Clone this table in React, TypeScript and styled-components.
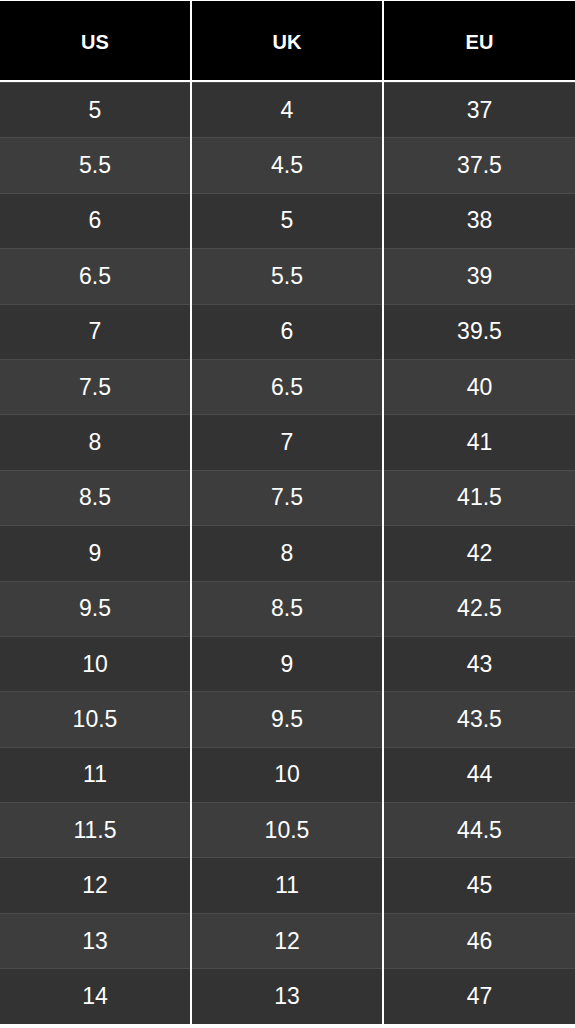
import React from "react";
import styled, { createGlobalStyle } from "styled-components";

const Global = createGlobalStyle`
  html, body { margin: 0; padding: 0; background: #ffffff; }
  body { font-family: "Liberation Sans", Arial, sans-serif; }
`;

const Table = styled.div`
  width: 575px;
  padding-top: 1px;
  background: #ffffff;
  display: flex;
  flex-direction: column;
`;

const Row = styled.div<{ $header?: boolean }>`
  display: grid;
  grid-template-columns: 190px 190px 1fr;
  column-gap: 2px;
  height: ${(p) => (p.$header ? "79px" : "55.4px")};
  margin-bottom: ${(p) => (p.$header ? "2px" : "0")};
`;

const Cell = styled.div<{ $header?: boolean; $alt?: boolean }>`
  display: flex;
  align-items: center;
  justify-content: center;
  box-sizing: border-box;
  padding-top: ${(p) => (p.$header ? "4px" : "0")};
  background: ${(p) => (p.$header ? "#000000" : p.$alt ? "#3d3d3d" : "#333333")};
  border-top: ${(p) => (p.$header ? "none" : "1px solid #4b4b4b")};
  color: #ffffff;
  font-size: ${(p) => (p.$header ? "20px" : "23px")};
  font-weight: ${(p) => (p.$header ? 700 : 400)};
`;

const rows: [string, string, string][] = [
  ["5", "4", "37"],
  ["5.5", "4.5", "37.5"],
  ["6", "5", "38"],
  ["6.5", "5.5", "39"],
  ["7", "6", "39.5"],
  ["7.5", "6.5", "40"],
  ["8", "7", "41"],
  ["8.5", "7.5", "41.5"],
  ["9", "8", "42"],
  ["9.5", "8.5", "42.5"],
  ["10", "9", "43"],
  ["10.5", "9.5", "43.5"],
  ["11", "10", "44"],
  ["11.5", "10.5", "44.5"],
  ["12", "11", "45"],
  ["13", "12", "46"],
  ["14", "13", "47"],
];

export default function App() {
  return (
    <>
      <Global />
      <Table>
        <Row $header>
          {["US", "UK", "EU"].map((h) => (
            <Cell key={h} $header>
              {h}
            </Cell>
          ))}
        </Row>
        {rows.map((r, i) => (
          <Row key={i}>
            {r.map((v, j) => (
              <Cell key={j} $alt={i % 2 === 1}>
                {v}
              </Cell>
            ))}
          </Row>
        ))}
      </Table>
    </>
  );
}
